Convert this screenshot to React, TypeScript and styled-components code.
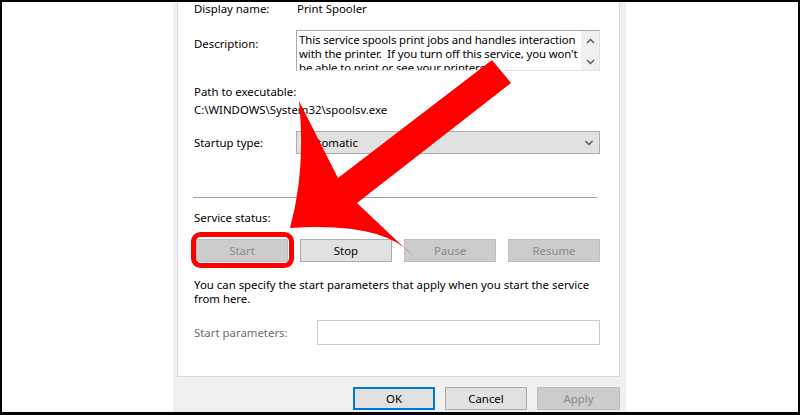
import React from "react";
import styled, { createGlobalStyle } from "styled-components";

const GlobalStyle = createGlobalStyle`
  html, body { margin: 0; padding: 0; background: #fff; }
  * { box-sizing: border-box; }
`;

const Frame = styled.div`
  position: relative;
  width: 800px;
  height: 415px;
  border-style: solid;
  border-color: #000;
  border-width: 2px 2px 3px 2px;
  background: #fff;
  display: grid;
  grid-template-columns: 171px 453px 1fr;
  overflow: hidden;
  font-family: "Noto Sans", "Open Sans", sans-serif;
  font-size: 11.4px;
  line-height: 14px;
  color: #000;
`;

const Dialog = styled.div`
  grid-column: 2;
  background: #f0f0f0;
  display: flex;
  flex-direction: column;
  padding: 0 6px 0 4px;
`;

const Panel = styled.div`
  height: 375px;
  background: #fff;
  border: 1px solid #dadada;
  border-top: none;
  padding: 0 19px 0 16px;
  display: flex;
  flex-direction: column;
`;

const Row = styled.div<{ $top: number; $label?: number; $align?: string }>`
  margin-top: ${(p) => p.$top}px;
  display: grid;
  grid-template-columns: ${(p) => p.$label ?? 102}px 1fr;
  align-items: ${(p) => p.$align ?? "center"};
`;

const Label = styled.div<{ $pad?: number; $muted?: boolean }>`
  padding-top: ${(p) => p.$pad ?? 0}px;
  color: ${(p) => (p.$muted ? "#6d6d6d" : "#000")};
  white-space: nowrap;
`;

const Line = styled.div<{ $top?: number }>`
  margin-top: ${(p) => p.$top ?? 0}px;
  white-space: pre;
`;

const Value = styled.div`
  padding-left: 1px;
  white-space: nowrap;
`;

const TextBox = styled.div`
  height: 41px;
  border: 1px solid #a9a9a9;
  border-right-color: #e3e3e3;
  border-bottom-color: #e3e3e3;
  display: flex;
  overflow: hidden;
`;

const TextBody = styled.div`
  flex: 1;
  padding: 2px 0 0 2px;
  overflow: hidden;
  letter-spacing: -0.12px;
`;

const ScrollBar = styled.div`
  width: 18px;
  background: #f0f0f0;
  display: flex;
  flex-direction: column;
  align-items: center;
  justify-content: space-between;
  padding: 7px 0 5px;
`;

const Combo = styled.div`
  height: 23px;
  border: 1px solid #adadad;
  background: #e1e1e1;
  display: flex;
  align-items: center;
  justify-content: space-between;
  padding: 0 5px 0 6px;
`;

const Separator = styled.div`
  margin: 43px 3px 0 -1px;
  height: 1px;
  background: #a0a0a0;
`;

const ButtonRow = styled.div<{ $top: number }>`
  margin-top: ${(p) => p.$top}px;
  padding-left: 2px;
  display: flex;
  gap: 12px;
`;

const Btn = styled.div<{ $disabled?: boolean; $default?: boolean; $w: number }>`
  width: ${(p) => p.$w}px;
  height: 23px;
  flex: none;
  display: flex;
  align-items: center;
  justify-content: center;
  background: ${(p) => (p.$disabled ? "#cccccc" : "#e1e1e1")};
  border: ${(p) =>
    p.$default ? "2px solid #0078d7" : p.$disabled ? "1px solid #bfbfbf" : "1px solid #adadad"};
  color: ${(p) => (p.$disabled ? "#8a8a8a" : "#000")};
`;

const Input = styled.div`
  height: 25px;
  border: 1px solid #cccccc;
  background: #fff;
`;

const Footer = styled.div`
  display: flex;
  justify-content: flex-end;
  gap: 10px;
  padding: 10px 0 0 0;
`;

const Overlay = styled.svg`
  position: absolute;
  left: -2px;
  top: -2px;
  width: 800px;
  height: 415px;
  pointer-events: none;
`;

const Chevron = ({ up, w = 9 }: { up?: boolean; w?: number }) => (
  <svg width={w} height={6} viewBox="0 0 9 6">
    <polyline
      points={up ? "1,5 4.5,1.5 8,5" : "1,1 4.5,4.5 8,1"}
      fill="none"
      stroke="#555"
      strokeWidth="1.4"
    />
  </svg>
);

export default function App() {
  return (
    <>
      <GlobalStyle />
      <Frame>
        <Dialog>
          <Panel>
            <Row $top={0}>
              <Label>Display name:</Label>
              <Value>Print Spooler</Value>
            </Row>
            <Row $top={14} $align="start">
              <Label $pad={7}>Description:</Label>
              <TextBox>
                <TextBody>
                  <Line>This service spools print jobs and handles interaction</Line>
                  <Line>with the printer.  If you turn off this service, you won't</Line>
                  <Line>be able to print or see your printers.</Line>
                </TextBody>
                <ScrollBar>
                  <Chevron up />
                  <Chevron />
                </ScrollBar>
              </TextBox>
            </Row>
            <Line $top={14}>Path to executable:</Line>
            <Line $top={4}>C:\WINDOWS\System32\spoolsv.exe</Line>
            <Row $top={14}>
              <Label>Startup type:</Label>
              <Combo>
                <span>Automatic</span>
                <Chevron w={10} />
              </Combo>
            </Row>
            <Separator />
            <Line $top={13}>Service status:</Line>
            <ButtonRow $top={14}>
              <Btn $w={92} $disabled>Start</Btn>
              <Btn $w={92}>Stop</Btn>
              <Btn $w={92} $disabled>Pause</Btn>
              <Btn $w={92} $disabled>Resume</Btn>
            </ButtonRow>
            <Line $top={16}>You can specify the start parameters that apply when you start the service</Line>
            <Line>from here.</Line>
            <Row $top={14} $label={123}>
              <Label $muted>Start parameters:</Label>
              <Input />
            </Row>
          </Panel>
          <Footer>
            <Btn $w={82} $default>OK</Btn>
            <Btn $w={82}>Cancel</Btn>
            <Btn $w={83} $disabled>Apply</Btn>
          </Footer>
        </Dialog>
        <Overlay viewBox="0 0 800 415">
          <rect x="193.5" y="234.5" width="98" height="31" rx="7" fill="none" stroke="#ff0000" strokeWidth="5" />
          <path
            d="M290 228 Q306 170 299 101 L338 178 L492 60 L511 83 L357 203 L413 256 Q385 222 290 228 Z"
            fill="#ff0000"
          />
        </Overlay>
      </Frame>
    </>
  );
}
